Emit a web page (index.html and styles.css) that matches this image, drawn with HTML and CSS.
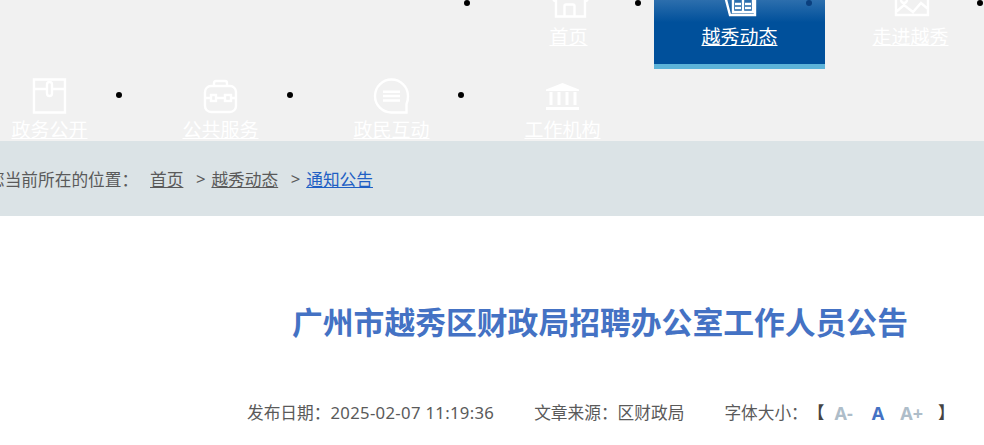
FILE: index.html
```html
<!DOCTYPE html>
<html lang="zh-CN">
<head>
  <meta charset="UTF-8" />
  <meta name="viewport" content="width=device-width, initial-scale=1.0" />
  <title>广州市越秀区财政局招聘办公室工作人员公告</title>
  <link rel="stylesheet" href="styles.css">
</head>
<body>
  <div class="page">
    <div class="nav">
      <ul class="nav-row nav-row-first">
        <li class="nav-item">
          <a href="#">
            <svg class="nav-icon" viewBox="0 0 40 40"><path d="M7 15V32.5H36V15M4 17L12 10M39 17L31 10M15.5 32V22Q15.5 20.5 17 20.5H24Q25.5 20.5 25.5 22V32"/></svg>
            <span>首页</span>
          </a>
        </li>
        <li class="nav-item nav-item-active">
          <a href="#">
            <svg class="nav-icon" viewBox="0 0 40 40"><path d="M4 8L10 31H35V4M13 10H33V28H13ZM23 10V28M15 20H21M15 24H21M25 20H31M25 24H31"/></svg>
            <span>越秀动态</span>
          </a>
        </li>
        <li class="nav-item">
          <a href="#">
            <svg class="nav-icon" viewBox="0 0 40 40"><path d="M5 3H37V31H5ZM5 28L13 21L22 28L30 19L37 25"/><circle cx="13" cy="16" r="3"/></svg>
            <span>走进越秀</span>
          </a>
        </li>
        <li class="nav-item"></li>
      </ul>
      <ul class="nav-row nav-row-second">
        <li class="nav-item">
          <a href="#">
            <svg class="nav-icon" viewBox="0 0 40 40"><path d="M4 3.5H35V36.5H4ZM4 13H17M22 13H35"/><rect x="17" y="6" width="5" height="14" rx="2.5"/></svg>
            <span>政务公开</span>
          </a>
        </li>
        <li class="nav-item">
          <a href="#">
            <svg class="nav-icon" viewBox="0 0 40 40"><rect x="4" y="10" width="31" height="26" rx="6"/><path d="M13 10V7Q13 5 15 5H24Q26 5 26 7V10M4 22H10M15 22H24M30 22H35"/><rect x="10" y="19" width="5" height="6"/><rect x="24" y="19" width="6" height="6"/></svg>
            <span>公共服务</span>
          </a>
        </li>
        <li class="nav-item">
          <a href="#">
            <svg class="nav-icon" viewBox="0 0 40 40"><path d="M34.5 36.5H19.5A16.5 16.5 0 1 1 36 20Q36 25 34.5 28ZM11 15.7H28M11 20H28M11 24.5H28"/></svg>
            <span>政民互动</span>
          </a>
        </li>
        <li class="nav-item">
          <a href="#">
            <svg class="nav-icon nav-icon-solid" viewBox="0 0 40 40"><path d="M19.5 7L36 13.5V15H3V13.5ZM3 31H36V34H3Z"/><rect x="6.5" y="16" width="3" height="13"/><rect x="14.5" y="16" width="3" height="13"/><rect x="22.5" y="16" width="3" height="13"/><rect x="30.5" y="16" width="3" height="13"/></svg>
            <span>工作机构</span>
          </a>
        </li>
      </ul>
    </div>

    <div class="crumbs">
      <span class="crumbs-label">您当前所在的位置：</span>
      <a href="#" class="crumb-home">首页</a>
      <span class="crumb-sep">&gt;</span>
      <a href="#">越秀动态</a>
      <span class="crumb-sep">&gt;</span>
      <a href="#" class="crumb-current">通知公告</a>
    </div>

    <h1 class="title">广州市越秀区财政局招聘办公室工作人员公告</h1>

    <div class="meta">
      <span>发布日期：<span class="date">2025-02-07 11:19:36</span></span>
      <span>文章来源：区财政局</span>
      <span class="font-size">
        字体大小：
        <b class="bracket bracket-open">【</b>
        <b class="size-btn size-btn-small">A-</b>
        <b class="size-btn size-btn-on">A</b>
        <b class="size-btn">A+</b>
        <b class="bracket bracket-close">】</b>
      </span>
    </div>
  </div>
</body>
</html>
```

FILE: styles.css
```css
body {
  margin: 0;
  background: white;
  color: #5a5a5a;
  font-family: "Noto Sans", "Noto Sans CJK SC", sans-serif;
  overflow: hidden;
}
a { color: inherit; }
.page {
  width: 1272px;
  margin: -23px 0 0 -36px;
}
.nav {
  background: #f1f1f1;
}
.nav-row {
  display: flex;
  margin: 0;
  padding: 0;
  list-style: none;
}
.nav-row-first { padding-left: 519px; }
.nav-item {
  position: relative;
  box-sizing: border-box;
  flex: none;
  width: 171px;
  height: 92px;
  padding-top: 7px;
  text-align: center;
  color: white;
  font-size: 19px;
  line-height: 26px;
}
.nav-item::before {
  content: "";
  position: absolute;
  left: -19px;
  top: 23px;
  width: 6px;
  height: 6px;
  border-radius: 50%;
  background: black;
}
.nav-item-active {
  background: linear-gradient(to bottom, #5a8ec0, #00509b 52%);
  border-bottom: 5px solid #5cb3d9;
}
.nav-item-active + .nav-item::before { background: #0a3f7e; }
.nav-item a { display: block; }
.nav-item span { display: block; }
.nav-row-second .nav-item { height: 72px; }
.nav-row-second span {
  margin-top: 3px;
  line-height: 22px;
}
.nav-icon {
  display: block;
  width: 40px;
  height: 40px;
  margin: 0 auto;
  fill: none;
  stroke: white;
  stroke-width: 2.4;
}
.nav-icon-solid {
  fill: white;
  stroke: none;
}
.crumbs {
  display: flex;
  align-items: center;
  height: 75px;
  padding-left: 24px;
  background: #dbe3e6;
  font-size: 16.7px;
}
.crumbs-label { width: 162px; }
.crumb-sep { margin: 0 6px 0 12.5px; }
.crumb-current { color: #1f5fc4; }
.title {
  margin: 80px 0 0;
  text-align: center;
  color: #4472c4;
  font-size: 30.8px;
  line-height: 52px;
  font-weight: 700;
}
.meta {
  display: flex;
  gap: 40px;
  margin-top: 51px;
  padding-left: 283px;
  font-size: 16.7px;
  line-height: 28px;
}
.date { letter-spacing: 0.32px; }
.font-size { display: flex; white-space: nowrap; }
.bracket { color: #444; }
.bracket-open { margin-right: 2px; }
.bracket-close { margin-left: 7px; }
.size-btn {
  margin: 0 8px;
  color: #aebdc9;
  font-size: 18px;
}
.size-btn-small { margin-right: 11px; }
.size-btn-on { color: #4472c4; }
```
